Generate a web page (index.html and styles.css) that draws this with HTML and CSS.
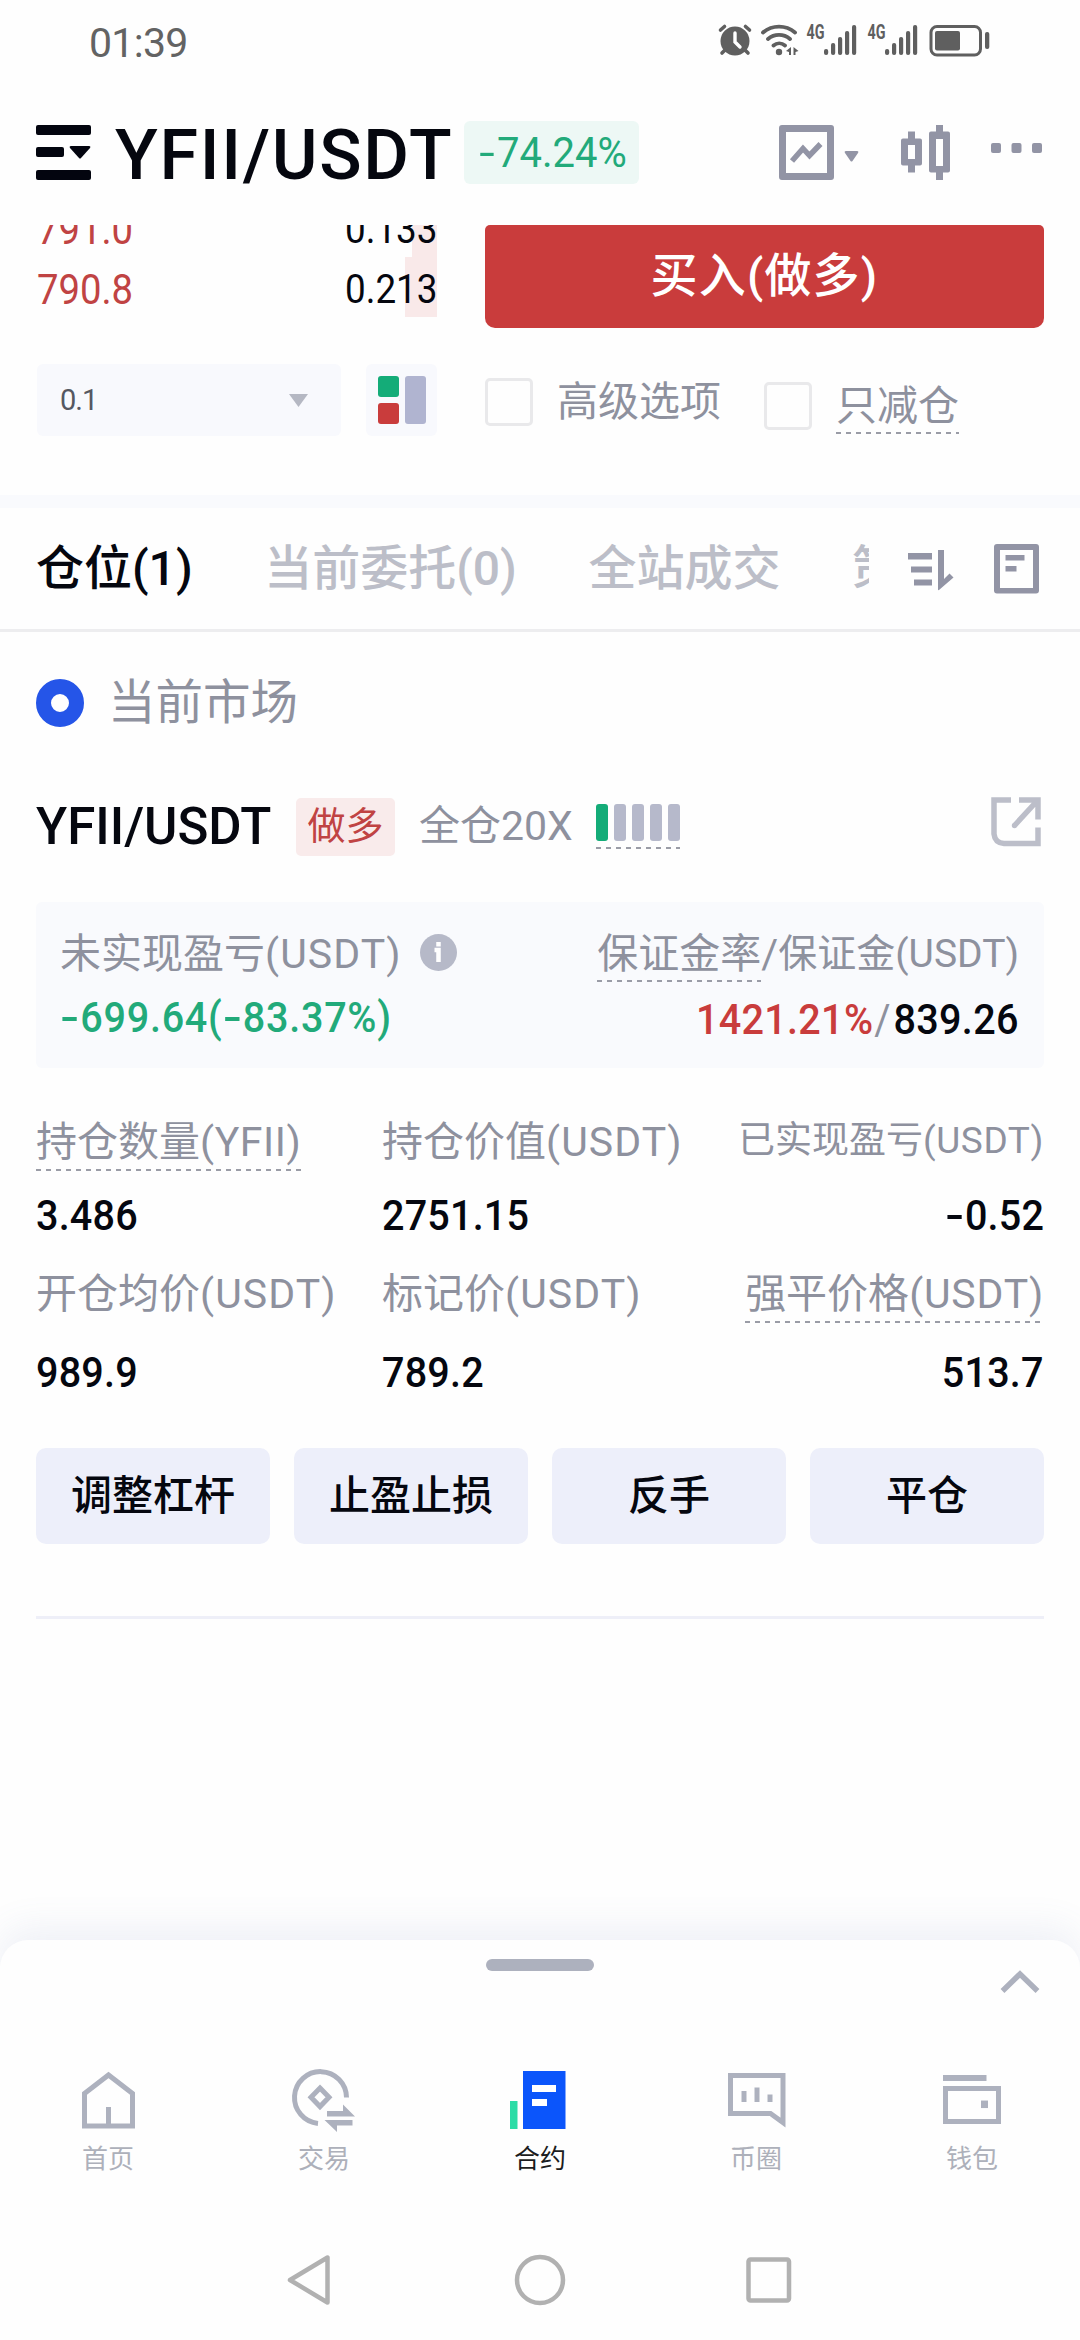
FILE: index.html
```html
<!DOCTYPE html>
<html lang="zh-CN">
<head>
<meta charset="utf-8">
<title>YFII/USDT</title>
<link rel="stylesheet" href="styles.css">
</head>
<body>
<div class="screen">
  <div class="status">
    <span class="clock">01:39</span>
    <svg class="status-icons" width="276" height="36" viewBox="716 22 276 36">
      <g fill="#5f5f5f" stroke="none">
        <circle cx="735" cy="41" r="14.5"/>
        <path d="M735 33v9l5 5" fill="none" stroke="#fff" stroke-width="3.4" stroke-linecap="round"/>
        <path d="M720.500 30l4-3.500M749.500 30l-4-3.500M722 53l4-4M748 53l-4-4" fill="none" stroke="#5f5f5f" stroke-width="3.600" stroke-linecap="round"/>
        <path d="M763 32.500a25 25 0 0 1 32 0M768 39a17 17 0 0 1 22 0M773.500 45.500a9 9 0 0 1 11.500 0" fill="none" stroke="#5f5f5f" stroke-width="3.800" stroke-linecap="round"/>
        <circle cx="779" cy="52" r="3.200"/>
        <path d="M786 51l5-4v8h-2v-3zM793.500 47l5 4-3 1v3h-2z"/>
        <g id="bars">
          <rect x="824" y="49" width="4.200" height="6" rx="2"/>
          <rect x="831" y="43" width="4.200" height="12" rx="2"/>
          <rect x="838" y="37" width="4.200" height="18" rx="2"/>
          <rect x="845" y="31" width="4.200" height="24" rx="2"/>
          <rect x="852" y="25" width="4.200" height="30" rx="2"/>
          <text x="806.500" y="39" textLength="18" lengthAdjust="spacingAndGlyphs" class="net">4G</text>
        </g>
        <use href="#bars" x="61"/>
        <rect x="931" y="26.500" width="49.500" height="28.500" rx="6" fill="none" stroke="#5f5f5f" stroke-width="3"/>
        <rect x="935" y="31" width="25" height="19.500" rx="2"/>
        <rect x="985" y="32" width="4.300" height="17" rx="2"/>
      </g>
    </svg>
  </div>

  <header class="head">
    <svg class="menu" width="55" height="55" viewBox="0 0 55 55" fill="#03050f">
      <rect width="55" height="10" rx="2"/><rect y="22" width="28" height="10" rx="2"/><rect y="45" width="55" height="10" rx="2"/>
      <path d="M35 21h18q2 0 1 2l-9 10q-1 1-2 0l-9-10q-1-2 1-2z"/>
    </svg>
    <h1 class="pair">YFII/USDT</h1>
    <div class="change"><span><i class="minus">-</i>74.24%</span></div>
    <svg class="tools" width="264" height="56" viewBox="779 125 264 56" fill="#9294a5">
      <path fill-rule="evenodd" d="M782 125h49q3 0 3 3v49q0 3-3 3h-49q-3 0-3-3v-49q0-3 3-3zM786 132v41h41v-41z"/>
      <path d="M792 161l11-12.500 6.500 7 11-11.500" fill="none" stroke="#9294a5" stroke-width="5.500"/>
      <path d="M846 151h11q2 0 1 2l-5.500 8q-1 1-2 0l-5.500-8q-1-2 1-2z"/>
      <path fill-rule="evenodd" d="M908 131.500h7v7h5q2 0 2 2v23q0 2-2 2h-5v7h-7v-7h-5q-2 0-2-2v-23q0-2 2-2h5zM908 145v14h7v-14zM936 125h7v6.500h5q2 0 2 2v37q0 2-2 2h-5v7.500h-7v-7.500h-5q-2 0-2-2v-37q0-2 2-2h5zM936 139v27h7v-27z"/>
      <rect x="991" y="143" width="10" height="10" rx="2"/><rect x="1011.500" y="143" width="10" height="10" rx="2"/><rect x="1032" y="143" width="10" height="10" rx="2"/>
    </svg>
  </header>

  <section class="order">
    <div class="book">
      <div class="level"><span class="price">791.0</span><div class="qty depth-a"><span>0.133</span></div></div>
      <div class="level"><span class="price">790.8</span><div class="qty depth-b"><span>0.213</span></div></div>
      <div class="book-tools">
        <div class="step"><span>0.1</span><svg width="19" height="13" viewBox="0 0 19 13"><path d="M0 0h19l-9.500 13z" fill="#b5b8c3"/></svg></div>
        <div class="layout-mode"><svg width="48" height="48" viewBox="0 0 48 48"><rect width="21" height="21" rx="3" fill="#14ac78"/><rect y="27" width="21" height="21" rx="3" fill="#c93c3c"/><rect x="27" width="21" height="48" rx="3" fill="#b0b4d0"/></svg></div>
      </div>
    </div>
    <div class="form">
      <div class="buy">买入(做多)</div>
      <div class="options">
        <i class="box"></i><span class="opt">高级选项</span>
        <i class="box low"></i><span class="opt low dash">只减仓</span>
      </div>
    </div>
  </section>

  <nav class="tabs">
    <div class="tab-list"><span class="on">仓位(1)</span><span>当前委托(0)</span><span>全站成交</span><span>策略</span></div>
    <svg width="132" height="50" viewBox="908 543.500 132 50" fill="#9294a5">
      <rect x="908" y="552.500" width="24" height="6.500"/><rect x="911" y="566" width="21" height="6"/><rect x="914" y="579" width="18" height="6"/>
      <path d="M938 549.500h6v29l5.500-5.500 4 4-14.500 12.500q-1 .500-1-.500z"/>
      <path fill-rule="evenodd" d="M997 543.500h39q3 0 3 3v43.500q0 3-3 3h-39q-3 0-3-3v-43.500q0-3 3-3zM1000 549.500v38h33v-38z"/>
      <rect x="1005.500" y="554.500" width="19" height="5.500"/><rect x="1005.500" y="565.500" width="11" height="5.500"/>
    </svg>
  </nav>

  <div class="market"><i class="radio"></i><span>当前市场</span></div>

  <section class="position">
    <div class="pos-head">
      <span class="sym">YFII/USDT</span><span class="side">做多</span><span class="lev">全仓20X</span>
      <span class="adl dash"><i class="hot"></i><i></i><i></i><i></i><i></i></span>
      <svg class="share" width="50" height="50" viewBox="991 797 50 50" fill="none" stroke="#bcbec9" stroke-width="5.500">
        <path d="M1011 800h-17v34q1 9 10 9.500h34v-16M1019 800h19v19.500M1037 801l-22 24"/><circle cx="1014.500" cy="825.500" r="2.700" fill="#bcbec9" stroke="none"/>
      </svg>
    </div>

    <div class="pnl">
      <div class="pnl-col">
        <div class="lab">未实现盈亏<span class="unit">(USDT)</span><svg width="37" height="37" viewBox="0 0 37 37"><circle cx="18.500" cy="18.500" r="18.500" fill="#b6b9c8"/><path d="M18.500 8v4.500M14.500 16h4v12" stroke="#fff" stroke-width="4.500" fill="none"/></svg></div>
        <div class="num up"><i class="minus">-</i>699.64(<i class="minus">-</i>83.37%)</div>
      </div>
      <div class="pnl-col end">
        <div class="lab"><span class="dash">保证金率</span>/<small>保证金(USDT)</small></div>
        <div class="num"><span class="down">1421.21%</span><span class="slash">/</span>839.26</div>
      </div>
    </div>

    <div class="stats">
      <div><span class="lab dash">持仓数量<span class="unit-s">(YFII)</span></span><b class="num">3.486</b></div>
      <div><span class="lab">持仓价值<span class="unit">(USDT)</span></span><b class="num">2751.15</b></div>
      <div class="end"><span class="lab small">已实现盈亏<span class="unit-s">(USDT)</span></span><b class="num"><i class="minus">-</i>0.52</b></div>
      <div><span class="lab">开仓均价<span class="unit">(USDT)</span></span><b class="num">989.9</b></div>
      <div><span class="lab">标记价<span class="unit">(USDT)</span></span><b class="num">789.2</b></div>
      <div class="end"><span class="lab dash">强平价格<span class="unit last">(USDT)</span></span><b class="num">513.7</b></div>
    </div>

    <div class="actions"><span>调整杠杆</span><span>止盈止损</span><span>反手</span><span>平仓</span></div>
  </section>

  <footer class="sheet">
    <div class="grip">
      <i class="handle"></i>
      <svg class="up-arrow" width="40" height="24" viewBox="0 0 40 24"><path d="M2.500 21L20 4l17.500 17" fill="none" stroke="#adb1be" stroke-width="5.500"/></svg>
    </div>
    <div class="bar">
      <div class="item"><svg width="66" height="66" viewBox="75 2066 66 66" fill="none" stroke="#adb1be" stroke-width="5"><path d="M84.500 2093.500l24-18.500 24 18.500v32.500h-48zM108.500 2107v19"/></svg>首页</div>
      <div class="item"><svg width="66" height="66" viewBox="291 2066 66 66" fill="none" stroke="#adb1be" stroke-width="5"><path d="M346.500 2097.500a26 26 0 1 0-28.500 26M320 2088l9 9.300-9 9.300-9-9.300z"/><path d="M327 2111h16v-6.500l12 12h-28zM352.500 2120v5.500h-15.500v6.500l-12.500-12z" fill="#adb1be" stroke="none"/></svg>交易</div>
      <div class="item active"><svg width="66" height="66" viewBox="507 2066 66 66"><path d="M510 2101h7.500v28h-7.500z" fill="#2cdca6"/><path d="M523 2071h42.500v58H523z" fill="#0b55fb"/><path d="M532 2085h24v7h-24zM532 2099h15v7h-15z" fill="#fff"/></svg>合约</div>
      <div class="item"><svg width="66" height="66" viewBox="723 2066 66 66" fill="none" stroke="#adb1be" stroke-width="5"><path d="M730.500 2075.500h52.500v47l-12.500-9h-40z"/><path d="M744 2091v11M757 2087.500v14.500M770 2094.500v7.500"/></svg>币圈</div>
      <div class="item"><svg width="66" height="66" viewBox="939 2066 66 66" fill="none" stroke="#adb1be" stroke-width="5"><path d="M943 2078h43.500" stroke-width="6"/><path d="M945.500 2088.500h53v33h-53z"/><path d="M981 2104.300h7" stroke-width="7.500"/></svg>钱包</div>
    </div>
    <svg class="sys" width="508" height="54" viewBox="286 2254 508 54" fill="none" stroke="#b1b1b1" stroke-width="4.500" stroke-linejoin="round">
      <path d="M290 2280l37.500-22.500v45z"/><circle cx="540" cy="2280" r="23"/><rect x="748.500" y="2259.500" width="40.500" height="41" rx="2"/>
    </svg>
  </footer>
</div>
</body>
</html>
```

FILE: styles.css
```css
* { box-sizing: border-box; }
body { margin: 0; background: #fefefe; }
i, b { font-style: normal; }
svg { display: block; flex: none; }

.screen {
  width: 1080px;
  height: 2340px;
  overflow: hidden;
  display: flex;
  flex-direction: column;
  background: #fefefe;
  color: #05070f;
  font-family: Roboto, "Noto Sans CJK SC", sans-serif;
  white-space: nowrap;
}

/* condensed figures use a wide minus sign */
.minus { display: inline-block; width: 22px; text-align: center; transform: scaleX(1.4); }

/* status bar */
.status { height: 80px; padding: 22px 88px 0 89px; display: flex; justify-content: space-between; }
.clock { font-size: 41px; line-height: 42px; color: #636363; letter-spacing: -0.7px; }
.net { font-size: 19.5px; font-weight: 700; }

/* header */
.head { height: 145px; padding: 41px 37px 0 36px; display: flex; align-items: flex-start; }
.menu { margin-top: 4px; }
.pair { margin: 2px 0 0 24px; width: 349px; font-size: 70px; line-height: 64px; font-weight: 500; letter-spacing: 1.7px; }
.change { width: 175px; height: 63px; border-radius: 6px; background: #edf8f5; color: #22aa7a; font-size: 43px; line-height: 63px; display: flex; justify-content: center; }
.change span { transform: scaleX(0.93); }
.tools { margin: 4px 0 0 auto; }

/* order form */
.order { height: 270px; display: flex; overflow: hidden; padding: 0 36px 0 37px; }
.book { width: 400px; margin-right: 48px; margin-top: -28px; }
.level { height: 60px; display: flex; justify-content: space-between; line-height: 64px; }
.price { font-size: 43px; color: #c04343; transform: scaleX(0.89); transform-origin: left; }
.qty { width: 120px; display: flex; justify-content: flex-end; font-size: 40px; line-height: 66px; background-repeat: no-repeat; background-position: right; background-image: linear-gradient(#f9e9e9, #f9e9e9); }
.qty span { transform: scaleX(0.92); transform-origin: right; }
.depth-a { background-size: 25px 100%; }
.depth-b { background-size: 32px 100%; }
.book-tools { display: flex; justify-content: space-between; margin-top: 47px; }
.step { width: 304px; height: 72px; padding: 0 33px 0 23px; border-radius: 6px; background: #f8f9fd; display: flex; align-items: center; justify-content: space-between; font-size: 29px; letter-spacing: -1px; color: #555861; }
.layout-mode { width: 71px; height: 72px; border-radius: 6px; background: #f8f9fd; display: grid; place-items: center; }
.form { flex: 1; }
.buy { height: 103px; border-radius: 5px 5px 10px 10px; background: #c93c3c; color: #fff; font-size: 47px; font-weight: 500; line-height: 101px; text-align: center; letter-spacing: 1.2px; }
.options { display: flex; align-items: flex-start; margin-top: 50px; color: #8e919e; font-size: 41px; line-height: 49px; }
.box { width: 48px; height: 48px; border: 3px solid #e9e9eb; border-radius: 5px; }
.opt { width: 164px; margin: 0 43px 0 24px; }
.low { margin-top: 4px; }
.opt.low { width: 123px; margin-right: 0; height: 52px; }
.dash { background: repeating-linear-gradient(90deg, #9a9ca6 0 5px, transparent 5px 10px) left bottom / 100% 2px no-repeat; }

/* tabs */
.tabs { height: 137px; flex: none; border-top: 13px solid #f9fafd; border-bottom: 3px solid #ededef; padding: 0 40px 0 36px; display: flex; align-items: center; justify-content: space-between; }
.tab-list { width: 833px; overflow: hidden; display: flex; gap: 71.5px; font-size: 48px; font-weight: 500; line-height: 72px; color: #bcbec8; }
.tab-list .on { color: #05070f; }

.market { height: 142px; flex: none; padding-left: 36px; display: flex; align-items: center; gap: 24px; color: #8e919e; font-size: 47.5px; line-height: 70px; }
.radio { width: 48px; height: 48px; border-radius: 50%; border: 15px solid #2555e8; }

/* position */
.position { margin: 0 36px; border-bottom: 3px solid #eeeff8; height: 845px; flex: none; }
.pos-head { height: 128px; padding-top: 24px; display: flex; align-items: flex-start; }
.sym { font-size: 51px; font-weight: 500; line-height: 57px; width: 260px; }
.side { width: 99px; height: 58px; background: #f9ebeb; border-radius: 5px; color: #c04343; font-size: 38px; line-height: 56px; text-align: center; }
.lev { margin-left: 24px; width: 177px; font-size: 41px; line-height: 57px; color: #8e919e; }
.adl { display: flex; gap: 6px; margin-top: 6px; height: 45px; }
.adl i { width: 12px; height: 37px; border-radius: 3px; background: #b6b9cb; }
.adl .hot { background: #14ac78; }
.share { margin: -1px 3px 0 auto; }

.lab { color: #8e919e; font-size: 41px; line-height: 46px; }
.lab small { font-size: 39px; }
.unit { letter-spacing: 1.1px; margin-right: -1px; }
.unit.last { letter-spacing: 0.8px; margin-right: 0; }
.unit-s { letter-spacing: 0.6px; }
.num { font-size: 43px; font-weight: 500; line-height: 50px; transform: scaleX(0.92); transform-origin: left; }
.up { color: #22aa7a; letter-spacing: 0.8px; }
.down { color: #c93c3c; letter-spacing: 0.3px; }
.slash { color: #8e919e; font-weight: 400; padding: 0 3px 0 1px; }
.end { text-align: right; }
.end .num { transform-origin: right; }

.pnl { height: 166px; padding: 29px 25px 0 24px; border-radius: 6px; background: #f9fafd; display: flex; justify-content: space-between; }
.pnl .lab { display: flex; height: 51px; margin-bottom: 10px; }
.pnl .lab svg { margin: 3px 0 0 19px; }
.pnl .end .num { padding-top: 2px; letter-spacing: 0.3px; }
.pnl .end .lab { justify-content: flex-end; }

.stats { display: grid; grid-template-columns: 346px 1fr auto; grid-template-rows: 152px 155px; padding-top: 51px; }
.stats > div { display: flex; flex-direction: column; align-items: flex-start; }
.stats > .end { align-items: flex-end; }
.stats .lab { height: 52px; }
.stats .small { font-size: 37px; line-height: 43px; }
.stats .num { margin-top: 19px; letter-spacing: 0.2px; }
.stats > div:nth-child(n+4) .num { margin-top: 24px; }

.actions { display: grid; grid-template-columns: repeat(4, 1fr); gap: 24px; margin-top: 22px; }
.actions span { height: 96px; border-radius: 10px; background: #edeffa; font-size: 41px; font-weight: 500; line-height: 96px; text-align: center; }

/* bottom sheet */
.sheet { margin-top: 321px; height: 400px; flex: none; border-radius: 28px 28px 0 0; background: #fefefe; box-shadow: 0 -12px 36px rgba(100, 115, 175, 0.1); }
.grip { height: 126px; padding: 19px 40px 0; display: grid; grid-template-columns: 1fr 108px 1fr; }
.handle { grid-column: 2; height: 12px; border-radius: 6px; background: #adb1be; }
.up-arrow { justify-self: end; margin-top: 11px; }
.bar { height: 188px; display: grid; grid-template-columns: repeat(5, 1fr); }
.item { display: flex; flex-direction: column; align-items: center; font-size: 26px; line-height: 55px; color: #adb0ba; }
.item.active { color: #1b1c20; }
.sys { margin-left: 286px; }
```
